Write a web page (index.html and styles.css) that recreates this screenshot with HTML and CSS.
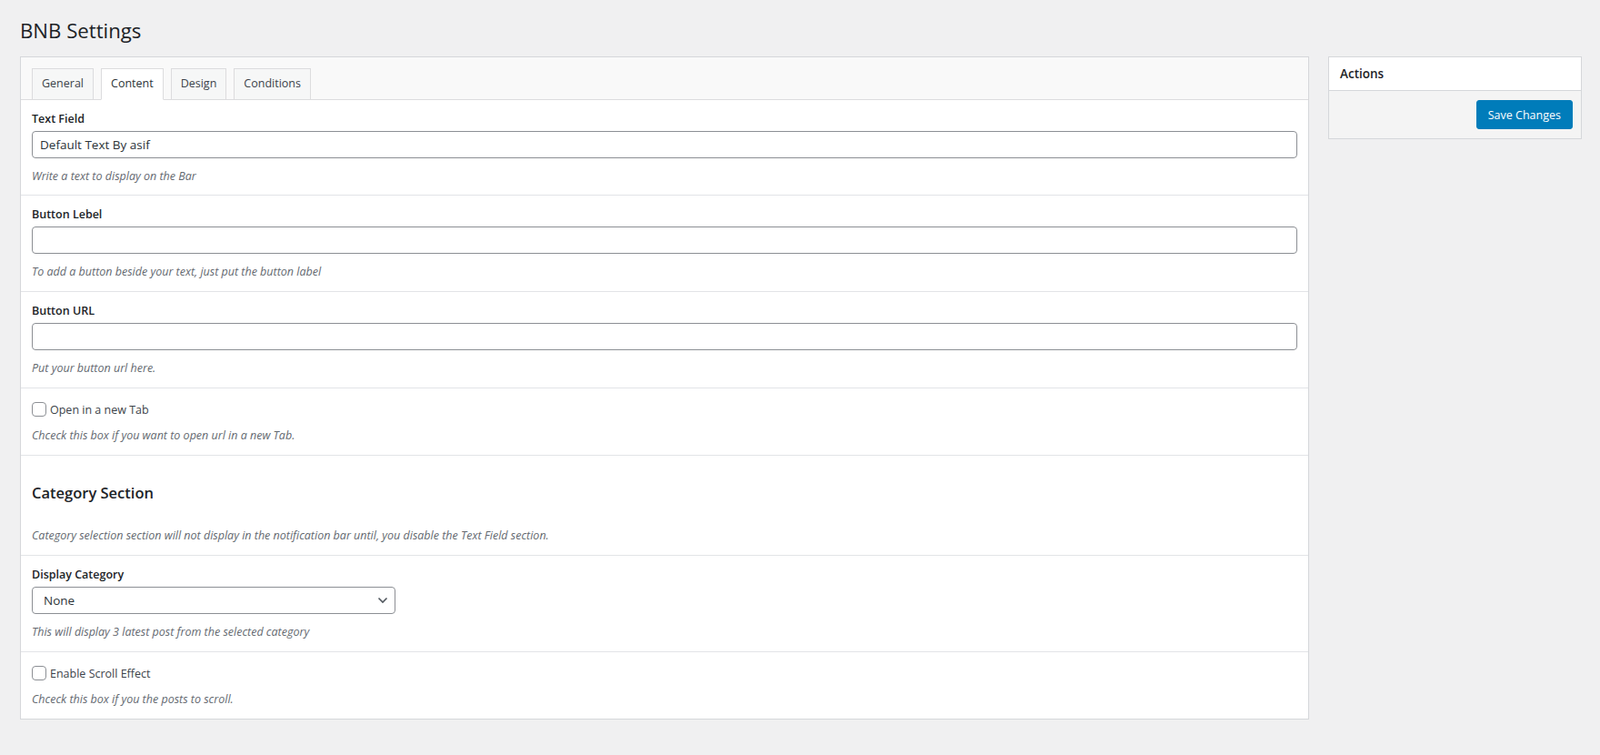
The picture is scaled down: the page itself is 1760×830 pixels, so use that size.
FILE: index.html
```html
<!DOCTYPE html>
<html lang="en">
<head>
  <meta charset="UTF-8" />
  <meta name="viewport" content="width=device-width, initial-scale=1.0"/>
  <title>BNB Settings</title>
  <link rel="stylesheet" href="styles.css">
</head>
<body>
  <div class="wrap">
    <h1 class="page-title">BNB Settings</h1>

    <div class="layout">
      <main class="settings-panel">
        <nav class="tab-bar">
          <a href="#" class="tab">General</a>
          <a href="#" class="tab active">Content</a>
          <a href="#" class="tab">Design</a>
          <a href="#" class="tab">Conditions</a>
        </nav>

        <div class="field-row first">
          <label class="field-label" for="textField">Text Field</label>
          <input type="text" id="textField" class="text-input" value="Default Text By asif" />
          <p class="field-desc">Write a text to display on the Bar</p>
        </div>

        <div class="field-row">
          <label class="field-label" for="btnLabel">Button Lebel</label>
          <input type="text" id="btnLabel" class="text-input" />
          <p class="field-desc">To add a button beside your text, just put the button label</p>
        </div>

        <div class="field-row">
          <label class="field-label" for="btnUrl">Button URL</label>
          <input type="text" id="btnUrl" class="text-input" />
          <p class="field-desc">Put your button url here.</p>
        </div>

        <div class="field-row">
          <label class="check-label"><input type="checkbox" class="check" /> Open in a new Tab</label>
          <p class="field-desc check-desc">Chceck this box if you want to open url in a new Tab.</p>
        </div>

        <div class="field-row">
          <h2 class="section-title">Category Section</h2>
          <p class="field-desc section-desc">Category selection section will not display in the notification bar until, you disable the Text Field section.</p>
        </div>

        <div class="field-row">
          <label class="field-label" for="category">Display Category</label>
          <span class="select-wrap">
            <select id="category" class="select-input">
              <option>None</option>
            </select>
            <svg class="select-arrow" width="12" height="8" viewBox="0 0 12 8">
              <path d="M1.5 1.5 L6 6 L10.5 1.5" fill="none" stroke="#50575e" stroke-width="1.6"/>
            </svg>
          </span>
          <p class="field-desc">This will display 3 latest post from the selected category</p>
        </div>

        <div class="field-row last">
          <label class="check-label"><input type="checkbox" class="check" /> Enable Scroll Effect</label>
          <p class="field-desc check-desc">Chceck this box if you the posts to scroll.</p>
        </div>
      </main>

      <aside class="actions-box">
        <h3 class="actions-title">Actions</h3>
        <div class="actions-body">
          <button class="save-btn">Save Changes</button>
        </div>
      </aside>
    </div>
  </div>
</body>
</html>
```

FILE: styles.css
```css
body {
  margin: 0;
  font-family: "Open Sans", "Noto Sans", Arial, sans-serif;
  font-size: 12.5px;
  background-color: #f0f0f1;
  color: #3c434a;
}
.wrap {
  padding: 0 20px 0 22px;
}
.page-title {
  margin: 0;
  padding: 19px 0 13px;
  font-size: 22.2px;
  font-weight: 400;
  line-height: 30px;
  color: #1d2327;
}
.layout {
  display: flex;
  gap: 21px;
  align-items: flex-start;
}
.settings-panel {
  flex: 1;
  background-color: #fff;
  border: 1px solid #d5d7da;
}
.tab-bar {
  display: flex;
  gap: 8px;
  padding: 12px 12px 0;
  background-color: #f9f9f9;
  border-bottom: 1px solid #dcdcde;
}
.tab {
  display: block;
  padding: 6px 10px 7px;
  margin-bottom: -1px;
  line-height: 20px;
  color: #3c434a;
  text-decoration: none;
  background-color: #f6f7f7;
  border: 1px solid #dcdcde;
}
.tab.active {
  background-color: #fff;
  border-bottom-color: #fff;
  color: #2c3338;
}
.field-row {
  padding: 12px 12px 12px;
  border-bottom: 1px solid #e2e4e7;
}
.field-row.first {
  padding-bottom: 11px;
}
.field-row.last {
  border-bottom: none;
}
.field-label {
  display: block;
  margin-bottom: 4px;
  line-height: 18px;
  font-weight: 600;
  color: #1d2327;
}
.text-input {
  display: block;
  box-sizing: border-box;
  width: 100%;
  height: 30px;
  margin: 0;
  padding: 0 8px;
  font-family: inherit;
  font-size: 13.5px;
  color: #2c3338;
  background-color: #fff;
  border: 1px solid #8c8f94;
  border-radius: 4px;
}
.field-desc {
  margin: 11px 0 0;
  line-height: 18px;
  font-style: italic;
  color: #646970;
}
.check-desc {
  margin-top: 9px;
}
.check-label {
  display: flex;
  align-items: center;
  gap: 4px;
  height: 22px;
  color: #3c434a;
}
.check {
  appearance: none;
  width: 16px;
  height: 16px;
  margin: 0;
  background-color: #fff;
  border: 1px solid #8c8f94;
  border-radius: 4px;
}
.section-title {
  margin: 18px 0 0;
  font-size: 16.5px;
  line-height: 22px;
  font-weight: 600;
  color: #1d2327;
}
.section-desc {
  margin-top: 27px;
}
.select-wrap {
  position: relative;
  display: block;
  width: 400px;
}
.select-input {
  appearance: none;
  display: block;
  box-sizing: border-box;
  width: 400px;
  height: 30px;
  margin: 0;
  padding: 0 24px 0 12px;
  font-family: inherit;
  font-size: 13.5px;
  color: #2c3338;
  background-color: #fff;
  border: 1px solid #8c8f94;
  border-radius: 4px;
}
.select-arrow {
  position: absolute;
  right: 8px;
  top: 11px;
}
.actions-box {
  width: 279px;
  box-sizing: border-box;
  background-color: #fff;
  border: 1px solid #d5d7da;
}
.actions-title {
  margin: 0;
  padding: 9px 12px 8px;
  font-size: 13.5px;
  line-height: 19px;
  font-weight: 600;
  color: #1d2327;
  border-bottom: 1px solid #d5d7da;
}
.actions-body {
  display: flex;
  justify-content: flex-end;
  padding: 10px 9px;
  background-color: #f4f4f4;
}
.save-btn {
  height: 32px;
  padding: 0 12px;
  font-family: inherit;
  font-size: 12.5px;
  color: #fff;
  background-color: #007cba;
  border: 1px solid #007cba;
  border-radius: 3px;
}
```
